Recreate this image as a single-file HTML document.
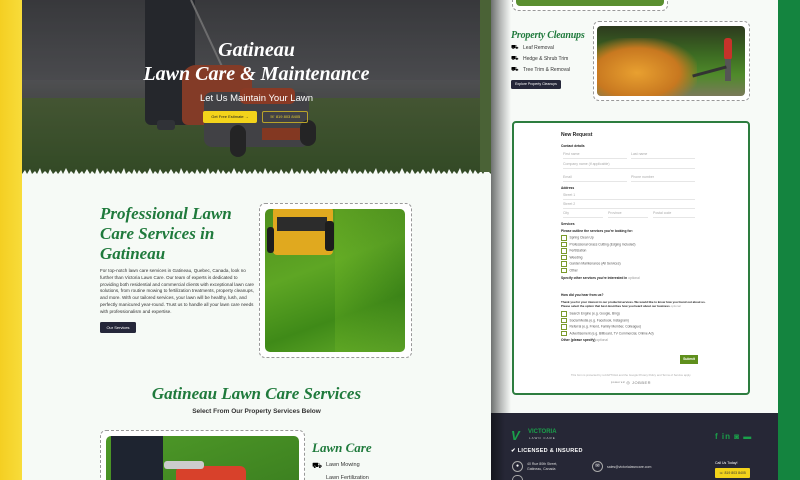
<!DOCTYPE html>
<html><head><meta charset="utf-8"><style>
*{margin:0;padding:0;box-sizing:border-box}
html{width:800px;height:480px;overflow:hidden}
body{width:800px;height:480px;overflow:hidden;position:relative;background:#f5f9f5;font-family:"Liberation Sans",sans-serif}
.a{position:absolute}
.h{font-family:"Liberation Serif",serif;font-style:italic;font-weight:bold;color:#1f7a3c}
.t{font-size:5px;color:#333;line-height:6.8px}
.dash{border:1.5px dashed #999;border-radius:6px;background:#fff}
.in{border-bottom:1px solid #e6e6e6;font-size:3.5px;color:#aaa;height:9px;padding-top:2px}
.cb{font-size:3.3px;color:#555;height:6px;line-height:5px;white-space:nowrap}
.cb:before{content:"";display:inline-block;width:3.5px;height:3.5px;border:0.6px solid #7a9a2a;margin-right:3px;vertical-align:middle}
.lb{font-size:3.3px;font-weight:bold;color:#222;height:6px;white-space:nowrap}
</style></head><body>
<div class="a" style="left:0;top:0;width:22px;height:480px;background:linear-gradient(90deg,#f4cf22,#f8dc3a)"></div>
<div class="a" style="left:778px;top:0;width:22px;height:480px;background:#14843f"></div>

<div class="a" style="left:22px;top:0;width:469px;height:480px;background:#f6faf6"></div>
<div class="a" style="left:22px;top:0;width:469px;height:175px;overflow:hidden">
  <div class="a" style="left:0;top:0;width:469px;height:80px;background:linear-gradient(180deg,#444548,#5c5d60)"></div>
  <div class="a" style="left:0;top:80px;width:469px;height:22px;background:linear-gradient(180deg,#626365,#585a58)"></div>
  <div class="a" style="left:0;top:98px;width:469px;height:77px;background:linear-gradient(180deg,#546b3c,#3d5c2a)"></div>
  <div class="a" style="left:123px;top:0;width:50px;height:125px;background:#2b2e33;border-radius:0 0 6px 6px"></div>
  <div class="a" style="left:135px;top:120px;width:18px;height:10px;background:#3a3d42;border-radius:3px"></div>
  <div class="a" style="left:168px;top:0;width:2px;height:90px;background:#8a8a8a;transform:rotate(-25deg);transform-origin:top"></div>
  <div class="a" style="left:160px;top:65px;width:70px;height:60px;background:#a9482c;border-radius:14px 14px 6px 6px"></div>
  <div class="a" style="left:182px;top:92px;width:105px;height:55px;background:#505155;border-radius:8px"></div>
  <div class="a" style="left:218px;top:88px;width:55px;height:16px;background:#b2472a;border-radius:5px"></div>
  <div class="a" style="left:240px;top:128px;width:38px;height:12px;background:#a94426"></div>
  <div class="a" style="left:208px;top:125px;width:16px;height:32px;background:#2a2a2a;border-radius:8px"></div>
  <div class="a" style="left:278px;top:120px;width:16px;height:26px;background:#2a2a2a;border-radius:8px"></div>
  <div class="a" style="left:0;top:0;width:469px;height:175px;background:rgba(20,20,25,0.25)"></div>
  <div class="a h" style="left:0;top:38px;width:469px;text-align:center;color:#fff;font-size:20px;line-height:24px">Gatineau<br>Lawn Care &amp; Maintenance</div>
  <div class="a" style="left:0;top:93px;width:469px;text-align:center;color:#fff;font-size:9.5px">Let Us Maintain Your Lawn</div>
  <div class="a" style="left:181px;top:111px;width:54px;height:12px;background:#f3d31b;border-radius:2px;font-size:4px;color:#222;text-align:center;line-height:12px">Get Free Estimate →</div>
  <div class="a" style="left:240px;top:111px;width:46px;height:12px;border:1px solid #b8a32a;border-radius:2px;font-size:4px;color:#e8cf30;text-align:center;line-height:10px">☏ 819 803 8405</div>
</div>
<svg class="a" style="left:22px;top:166px" width="469" height="12"><path d="M0 12 L0 8 L3 4 L5 8 L8 3 L10 8 L13 5 L15 8 L18 2 L20 8 L23 5 L26 8 L28 3 L31 8 L34 5 L36 8 L39 4 L41 8 L44 2 L47 8 L49 5 L52 8 L54 3 L57 8 L60 5 L62 8 L65 3 L68 8 L70 5 L73 8 L75 2 L78 8 L81 4 L83 8 L86 5 L89 8 L91 3 L94 8 L96 5 L99 8 L102 2 L104 8 L107 5 L110 8 L112 3 L115 8 L117 4 L120 8 L123 5 L125 8 L128 2 L131 8 L133 5 L136 8 L138 3 L141 8 L144 5 L146 8 L149 3 L152 8 L154 5 L157 8 L159 2 L162 8 L165 4 L167 8 L170 5 L173 8 L175 3 L178 8 L180 5 L183 8 L186 2 L188 8 L191 5 L194 8 L196 3 L199 8 L201 4 L204 8 L207 5 L209 8 L212 2 L215 8 L217 5 L220 8 L222 3 L225 8 L228 5 L230 8 L233 3 L236 8 L238 5 L241 8 L243 2 L246 8 L249 4 L251 8 L254 5 L257 8 L259 3 L262 8 L264 5 L267 8 L270 2 L272 8 L275 5 L278 8 L280 3 L283 8 L285 4 L288 8 L291 5 L293 8 L296 2 L299 8 L301 5 L304 8 L306 3 L309 8 L312 5 L314 8 L317 3 L320 8 L322 5 L325 8 L327 2 L330 8 L333 4 L335 8 L338 5 L341 8 L343 3 L346 8 L348 5 L351 8 L354 2 L356 8 L359 5 L362 8 L364 3 L367 8 L369 4 L372 8 L375 5 L377 8 L380 2 L383 8 L385 5 L388 8 L390 3 L393 8 L396 5 L398 8 L401 3 L404 8 L406 5 L409 8 L411 2 L414 8 L417 4 L419 8 L422 5 L425 8 L427 3 L430 8 L432 5 L435 8 L438 2 L440 8 L443 5 L446 8 L448 3 L451 8 L453 4 L456 8 L459 5 L461 8 L464 3 L469 8 L469 12 Z" fill="#f6faf6"/></svg>

<div class="a h" style="left:100px;top:204px;font-size:17px;line-height:20px;width:150px">Professional Lawn Care Services in Gatineau</div>
<div class="a t" style="left:100px;top:268px;width:156px;font-size:4.6px">For top-notch lawn care services in Gatineau, Quebec, Canada, look no further than Victoria Lawn Care. Our team of experts is dedicated to providing both residential and commercial clients with exceptional lawn care solutions, from routine mowing to fertilization treatments, property cleanups, and more. With our tailored services, your lawn will be healthy, lush, and perfectly manicured year-round. Trust us to handle all your lawn care needs with professionalism and expertise.</div>
<div class="a" style="left:100px;top:322px;width:36px;height:11px;background:#25273a;border-radius:1.5px;color:#fff;font-size:4px;text-align:center;line-height:11px">Our Services</div>
<div class="a dash" style="left:259px;top:203px;width:153px;height:155px"></div>
<div class="a" style="left:265px;top:209px;width:140px;height:143px;border-radius:5px;overflow:hidden;background:linear-gradient(160deg,#4f8f1e,#5ea624 40%,#3f8a18 70%,#66ad2a)">
  <div class="a" style="left:8px;top:-2px;width:60px;height:48px;background:#e0a91f;border-radius:4px"></div>
  <div class="a" style="left:12px;top:8px;width:50px;height:14px;background:#2c2c2c"></div>
  <div class="a" style="left:2px;top:18px;width:7px;height:26px;background:#1d1d1d;border-radius:3px"></div>
  <div class="a" style="left:60px;top:12px;width:9px;height:30px;background:#1d1d1d;border-radius:3px"></div>
  <div class="a" style="left:70px;top:0;width:70px;height:143px;background:linear-gradient(90deg,rgba(120,190,40,.25),rgba(40,100,20,.2))"></div>
</div>

<div class="a h" style="left:22px;top:384px;width:469px;text-align:center;font-size:17px">Gatineau Lawn Care Services</div>
<div class="a" style="left:22px;top:408px;width:469px;text-align:center;font-size:6.5px;font-weight:bold;color:#333">Select From Our Property Services Below</div>
<div class="a dash" style="left:100px;top:430px;width:205px;height:60px"></div>
<div class="a" style="left:106px;top:436px;width:193px;height:50px;border-radius:5px;overflow:hidden;background:linear-gradient(160deg,#4f9a28,#3c8020)">
  <div class="a" style="left:5px;top:0;width:52px;height:50px;background:#1e2430"></div>
  <div class="a" style="left:70px;top:30px;width:70px;height:25px;background:#d8412b;border-radius:6px"></div>
  <div class="a" style="left:58px;top:25px;width:40px;height:8px;background:#ccc;border-radius:3px"></div>
</div>
<div class="a h" style="left:312px;top:440px;font-size:13px">Lawn Care</div>
<div class="a" style="left:312px;top:461px;font-size:8px">⛟</div>
<div class="a" style="left:326px;top:462px;font-size:5.5px;color:#333">Lawn Mowing</div>
<div class="a" style="left:326px;top:475px;font-size:5.5px;color:#333">Lawn Fertilization</div>

<div class="a" style="left:480px;top:0;width:11px;height:172px;background:#4a6236"></div>

<div class="a" style="left:491px;top:0;width:287px;height:413px;background:#f7faf7"></div>
<div class="a" style="left:491px;top:0;width:20px;height:413px;background:linear-gradient(90deg,#6e7170,#b9bbba 50%,rgba(247,250,247,0))"></div>
<div class="a" style="left:491px;top:413px;width:287px;height:67px;background:#262736"></div>
<div class="a" style="left:491px;top:413px;width:14px;height:67px;background:linear-gradient(90deg,#15161d,rgba(38,39,54,0))"></div>

<div class="a dash" style="left:512px;top:-6px;width:156px;height:17px"></div>
<div class="a" style="left:516px;top:0;width:148px;height:6px;background:#5a8f30;border-radius:0 0 4px 4px"></div>

<div class="a h" style="left:511px;top:30px;font-size:10px;letter-spacing:-0.2px">Property Cleanups</div>
<div class="a" style="left:511px;top:44px;font-size:6px">⛟</div><div class="a" style="left:523px;top:45px;font-size:5px;color:#333">Leaf Removal</div>
<div class="a" style="left:511px;top:55px;font-size:6px">⛟</div><div class="a" style="left:523px;top:56px;font-size:5px;color:#333">Hedge &amp; Shrub Trim</div>
<div class="a" style="left:511px;top:66px;font-size:6px">⛟</div><div class="a" style="left:523px;top:67px;font-size:5px;color:#333">Tree Trim &amp; Removal</div>
<div class="a" style="left:511px;top:80px;width:50px;height:9px;background:#25273a;border-radius:1.5px;color:#fff;font-size:3.5px;text-align:center;line-height:9px">Explore Property Cleanups</div>

<div class="a dash" style="left:593px;top:21px;width:157px;height:80px"></div>
<div class="a" style="left:597px;top:26px;width:148px;height:70px;border-radius:4px;overflow:hidden;background:linear-gradient(180deg,#2d3a1e,#3c6a22 40%,#4f8a2a 70%,#7a7a5a)">
  <div class="a" style="left:0;top:12px;width:100px;height:58px;background:radial-gradient(ellipse at 40% 60%,#e8a030,#c87820 50%,rgba(180,100,20,0) 75%)"></div>
  <div class="a" style="left:127px;top:12px;width:8px;height:22px;background:#c8322a;border-radius:3px"></div>
  <div class="a" style="left:128px;top:33px;width:6px;height:22px;background:#555"></div>
  <div class="a" style="left:95px;top:44px;width:35px;height:3px;background:#333;transform:rotate(-15deg)"></div>
</div>

<div class="a" style="left:512px;top:121px;width:238px;height:274px;border:2px solid #2d7d3f;border-radius:4px;background:#fff"></div>
<div class="a" style="left:561px;top:132px;font-size:5px;font-weight:bold;color:#222">New Request</div>
<div class="a lb" style="left:561px;top:144px">Contact details</div>
<div class="a in" style="left:563px;top:150px;width:64px">First name</div>
<div class="a in" style="left:631px;top:150px;width:64px">Last name</div>
<div class="a in" style="left:563px;top:160px;width:132px">Company name (if applicable)</div>
<div class="a in" style="left:563px;top:173px;width:64px">Email</div>
<div class="a in" style="left:631px;top:173px;width:64px">Phone number</div>
<div class="a lb" style="left:561px;top:186px">Address</div>
<div class="a in" style="left:563px;top:191px;width:132px">Street 1</div>
<div class="a in" style="left:563px;top:200px;width:132px">Street 2</div>
<div class="a in" style="left:563px;top:209px;width:40px">City</div>
<div class="a in" style="left:608px;top:209px;width:40px">Province</div>
<div class="a in" style="left:653px;top:209px;width:42px">Postal code</div>
<div class="a lb" style="left:561px;top:222px">Services</div>
<div class="a lb" style="left:561px;top:229px">Please outline the services you're looking for:</div>
<div class="a cb" style="left:561px;top:235px">Spring Clean Up</div>
<div class="a cb" style="left:561px;top:241.5px">Professional Grass Cutting (Edging Included)</div>
<div class="a cb" style="left:561px;top:248px">Fertilization</div>
<div class="a cb" style="left:561px;top:254.5px">Weeding</div>
<div class="a cb" style="left:561px;top:261px">Garden Maintenance (All Services)</div>
<div class="a cb" style="left:561px;top:267.5px">Other</div>
<div class="a lb" style="left:561px;top:276px">Specify other services you're interested in <span style="font-weight:normal;color:#999">optional</span></div>
<div class="a lb" style="left:561px;top:293px">How did you hear from us?</div>
<div class="a" style="left:561px;top:300px;width:145px;line-height:4.3px;font-size:2.9px;font-weight:bold;color:#222">Thank you for your interest in our products/services. We would like to know how you found out about us. Please select the option that best describes how you heard about our business <span style="font-weight:normal;color:#999">optional</span></div>
<div class="a cb" style="left:561px;top:311px">Search Engine (e.g. Google, Bing)</div>
<div class="a cb" style="left:561px;top:317.5px">Social Media (e.g. Facebook, Instagram)</div>
<div class="a cb" style="left:561px;top:324px">Referral (e.g. Friend, Family Member, Colleague)</div>
<div class="a cb" style="left:561px;top:330.5px">Advertisement (e.g. Billboard, TV Commercial, Online Ad)</div>
<div class="a lb" style="left:561px;top:338px">Other (please specify) <span style="font-weight:normal;color:#999">optional</span></div>
<div class="a" style="left:680px;top:355px;width:18px;height:9px;background:#5f8f1c;color:#fff;font-size:3.5px;font-weight:bold;text-align:center;line-height:9px">Submit</div>
<div class="a" style="left:561px;top:373px;width:140px;text-align:center;font-size:2.8px;color:#aaa">This form is protected by reCAPTCHA and the Google Privacy Policy and Terms of Service apply.</div>
<div class="a" style="left:561px;top:380px;width:140px;text-align:center;font-size:4px;color:#777;letter-spacing:0.5px">ᵖᵒʷᵉʳᵉᵈ ◎ JOBBER</div>

<div class="a" style="left:511px;top:428px;font-size:13px;font-weight:bold;color:#1aa04a;font-style:italic">V</div>
<div class="a" style="left:528px;top:429px;font-size:6px;font-weight:bold;color:#1aa04a">VICTORIA</div>
<div class="a" style="left:529px;top:436px;font-size:3px;color:#ccc;letter-spacing:1px">LAWN CARE</div>
<div class="a" style="left:511px;top:448px;font-size:5.5px;font-weight:bold;color:#fff;letter-spacing:0.3px">✔ LICENSED &amp; INSURED</div>
<div class="a" style="left:512px;top:461px;width:11px;height:11px;border:1px solid #aaa;border-radius:50%;color:#fff;font-size:5px;text-align:center;line-height:9px">●</div>
<div class="a" style="left:527px;top:462px;font-size:3.5px;color:#ddd;line-height:5px">40 Rue 80th Street,<br>Gatineau, Canada</div>
<div class="a" style="left:592px;top:461px;width:11px;height:11px;border:1px solid #aaa;border-radius:50%;color:#fff;font-size:5px;text-align:center;line-height:9px">✉</div>
<div class="a" style="left:607px;top:465px;font-size:3.5px;color:#ddd">sales@victorialawncare.com</div>
<div class="a" style="left:512px;top:475px;width:11px;height:5px;border:1px solid #aaa;border-bottom:none;border-radius:6px 6px 0 0"></div>
<div class="a" style="left:715px;top:432px;font-size:8px;font-weight:bold;color:#1aa04a;letter-spacing:1px">f in ◙ ▬</div>
<div class="a" style="left:715px;top:461px;font-size:3.5px;color:#fff">Call Us Today!</div>
<div class="a" style="left:715px;top:468px;width:35px;height:10px;background:#f3d31b;border-radius:1px;font-size:3.5px;color:#333;text-align:center;line-height:10px">☏ 819 803 8405</div>
</body></html>
